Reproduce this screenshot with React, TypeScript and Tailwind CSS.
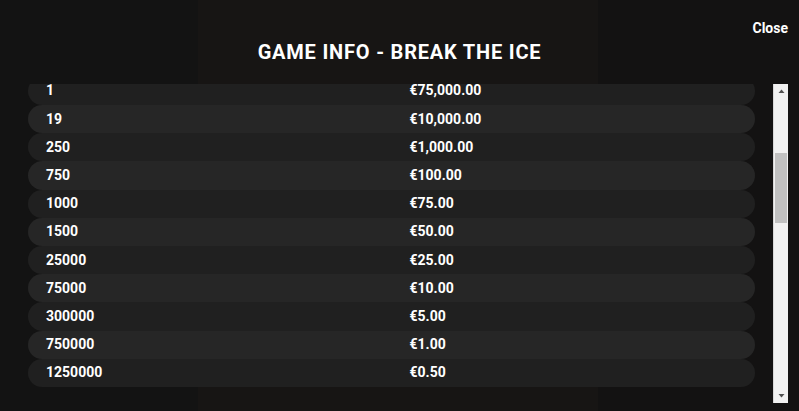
import React from "react";

const rows: [string, string][] = [
  ["1", "€75,000.00"],
  ["19", "€10,000.00"],
  ["250", "€1,000.00"],
  ["750", "€100.00"],
  ["1000", "€75.00"],
  ["1500", "€50.00"],
  ["25000", "€25.00"],
  ["75000", "€10.00"],
  ["300000", "€5.00"],
  ["750000", "€1.00"],
  ["1250000", "€0.50"],
];

export default function App() {
  return (
    <div
      className="w-[799px] h-[411px] text-white overflow-hidden bg-[linear-gradient(to_right,#131313_0px,#131313_198px,#171514_198px,#171514_598px,#131212_598px,#131212_799px)]"
      style={{ fontFamily: "Roboto, 'Liberation Sans', sans-serif" }}
    >
      <div className="h-[84px] flex flex-col">
        <div className="flex justify-end pt-[18px] pr-[11px] h-[38px]">
          <button className="text-[14px] leading-[20px] font-bold text-white">Close</button>
        </div>
        <h1 className="text-center text-[20px] leading-[28px] font-bold tracking-[0.8px] text-white">
          GAME INFO - BREAK THE ICE
        </h1>
      </div>
      <div className="ml-[28px] mr-[11px] h-[319px] flex gap-[18px]">
        <div className="flex-1 overflow-hidden">
          <div className="-mt-[7.2px] flex flex-col">
            {rows.map(([a, b], i) => (
              <div
                key={a}
                className={
                  "h-[28.2px] shrink-0 rounded-full grid grid-cols-2 items-center text-[14px] font-bold " +
                  (i % 2 === 0 ? "bg-[#202020]" : "bg-[#262626]")
                }
              >
                <div className="pl-[18px]">{a}</div>
                <div className="pl-[18px]">{b}</div>
              </div>
            ))}
          </div>
        </div>
        <div className="w-[15px] h-full bg-[#f1f1f1] border-l border-[#d8d8d8] flex flex-col">
          <div className="h-[15px] flex items-center justify-center">
            <svg width="7" height="5" viewBox="0 0 7 5">
              <polygon points="3.5,0.5 6.5,4 0.5,4" fill="#505050" />
            </svg>
          </div>
          <div className="flex-1 flex flex-col px-[1px]">
            <div className="h-[54px]" />
            <div className="h-[70px] bg-[#c1c1c1]" />
          </div>
          <div className="h-[15px] flex items-center justify-center">
            <svg width="7" height="5" viewBox="0 0 7 5">
              <polygon points="0.5,1 6.5,1 3.5,4.5" fill="#505050" />
            </svg>
          </div>
        </div>
      </div>
    </div>
  );
}
